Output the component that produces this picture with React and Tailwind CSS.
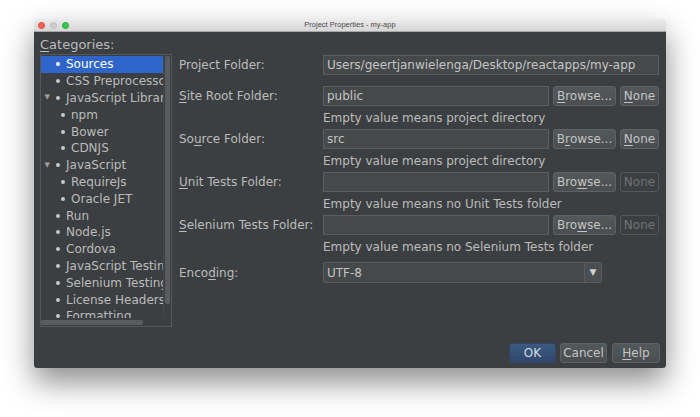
import React from "react";

const F = { fontFamily: '"DejaVu Sans", "Liberation Sans", sans-serif' };

function U({ children }) {
  return <span className="underline underline-offset-2">{children}</span>;
}

const tree = [
  { t: "Sources", lvl: 0, sel: true },
  { t: "CSS Preprocessors", lvl: 0 },
  { t: "JavaScript Libraries", lvl: 0, exp: true },
  { t: "npm", lvl: 1 },
  { t: "Bower", lvl: 1 },
  { t: "CDNJS", lvl: 1 },
  { t: "JavaScript", lvl: 0, exp: true },
  { t: "RequireJs", lvl: 1 },
  { t: "Oracle JET", lvl: 1 },
  { t: "Run", lvl: 0 },
  { t: "Node.js", lvl: 0 },
  { t: "Cordova", lvl: 0 },
  { t: "JavaScript Testing", lvl: 0 },
  { t: "Selenium Testing", lvl: 0 },
  { t: "License Headers", lvl: 0 },
  { t: "Formatting", lvl: 0 },
];

function Btn({ children, w, disabled }) {
  return (
    <div
      className={`h-[20px] flex items-center justify-center rounded-[3px] border ${disabled ? "text-[#6f7274] bg-[#3c3f41] border-[#55585a]" : "text-[#c4c4c4] border-[#5e6264] bg-gradient-to-b from-[#53585a] to-[#4a4e50]"}`}
      style={{ width: w }}
    >
      {children}
    </div>
  );
}

function Field({ value, w = 226 }) {
  return (
    <div
      className="h-[20px] border border-[#5a5d5f] bg-[#45494a] text-[#c4c4c4] flex items-center pl-[3px] whitespace-nowrap overflow-hidden"
      style={{ width: w }}
    >
      {value}
    </div>
  );
}

function Row({ label, value, disabledNone, browse }) {
  return (
    <div className="flex items-center h-[20px]">
      <div className="w-[144px] text-[#bbbbbb] whitespace-nowrap">{label}</div>
      <Field value={value} />
      <div className="ml-[4px]"><Btn w={63}>{browse}</Btn></div>
      <div className="ml-[4px]"><Btn w={39} disabled={disabledNone}>{disabledNone ? "None" : <><U>N</U>one</>}</Btn></div>
    </div>
  );
}

function Helper({ children, h = 23 }) {
  return (
    <div className="flex items-center pl-[144px] text-[#bbbbbb] whitespace-nowrap" style={{ height: h }}>
      {children}
    </div>
  );
}

export default function App() {
  return (
    <div className="w-[700px] h-[417px] bg-white overflow-hidden text-[12px] leading-none" style={F}>
      <div className="ml-[34px] mt-[19px] w-[632px] h-[349px] flex flex-col shadow-[0_14px_30px_rgba(0,0,0,0.45)] rounded-[3px] overflow-hidden">
        {/* title bar */}
        <div className="h-[13px] relative flex items-center bg-gradient-to-b from-[#ececec] to-[#d6d6d6] border-b border-[#a9a9a9]">
          <div className="flex gap-[5px] pl-[4px]">
            <div className="w-[7px] h-[7px] rounded-full bg-[#fc5f57] border border-[#e0443e]" />
            <div className="w-[7px] h-[7px] rounded-full bg-[#cfcfcf] border border-[#bcbcbc]" />
            <div className="w-[7px] h-[7px] rounded-full bg-[#35c84a] border border-[#26a93a]" />
          </div>
          <div className="absolute inset-0 flex items-center justify-center text-[7.5px] text-[#4a4a4a]" style={{ fontFamily: '"Liberation Sans", sans-serif' }}>
            Project Properties - my-app
          </div>
        </div>
        {/* body */}
        <div className="flex-1 bg-[#3c3f41] flex flex-col px-[6px] pb-[5px]">
          <div className="flex">
            {/* left */}
            <div className="w-[132px] flex flex-col shrink-0">
              <div className="h-[22px] pt-[6px] text-[13px] text-[#bbbbbb]"><U>C</U>ategories:</div>
              <div className="h-[273px] border border-[#555759] flex flex-col overflow-hidden">
                <div className="flex flex-1 min-h-0 overflow-hidden">
                  <div className="flex-1 min-w-0 pt-[1px] overflow-hidden">
                    {tree.map((r) => (
                      <div
                        key={r.t}
                        className={`h-[16.8px] flex items-center whitespace-nowrap ${r.sel ? "bg-[#2f65ca] text-white" : "text-[#bbbbbb]"}`}
                      >
                        <div className="w-[10px] shrink-0 flex justify-end pr-[1px] text-[7px] text-[#a0a0a0]">{r.exp ? "▼" : ""}</div>
                        <div style={{ width: r.lvl ? 17 : 12 }} className="shrink-0 flex justify-end">
                          <div className={`w-[4px] h-[4px] rounded-full mr-[3px] ${r.sel ? "bg-white" : "bg-[#c8c8c8]"}`} />
                        </div>
                        <div className="pl-[3px] shrink-0">{r.t}</div>
                      </div>
                    ))}
                  </div>
                  <div className="w-[8px] shrink-0 flex justify-center pt-[1px] pb-[14px] border-l border-[#45484a]">
                    <div className="w-[5px] h-full rounded-[2px] bg-[#595c5e]" />
                  </div>
                </div>
                <div className="h-[8px] shrink-0 flex items-center">
                  <div className="w-[102px] h-[5px] rounded-[2px] bg-[#595c5e]" />
                </div>
              </div>
            </div>
            {/* right */}
            <div className="ml-[7px] pt-[23px] flex flex-col">
              <div className="flex items-center h-[20px]">
                <div className="w-[144px] text-[#bbbbbb]">Project Folder:</div>
                <Field value="Users/geertjanwielenga/Desktop/reactapps/my-app" w={336} />
              </div>
              <div className="h-[11px]" />
              <Row label={<><U>S</U>ite Root Folder:</>} value="public" browse={<><U>B</U>rowse...</>} />
              <Helper>Empty value means project directory</Helper>
              <Row label={<>So<U>u</U>rce Folder:</>} value="src" browse={<>B<U>r</U>owse...</>} />
              <Helper>Empty value means project directory</Helper>
              <Row label={<><U>U</U>nit Tests Folder:</>} value="" browse={<>Bro<U>w</U>se...</>} disabledNone />
              <Helper>Empty value means no Unit Tests folder</Helper>
              <Row label={<><U>S</U>elenium Tests Folder:</>} value="" browse={<>Bro<U>w</U>se...</>} disabledNone />
              <Helper h={24}>Empty value means no Selenium Tests folder</Helper>
              <div className="h-[3px]" />
              <div className="flex items-center h-[21px]">
                <div className="w-[144px] text-[#bbbbbb]">Enco<U>d</U>ing:</div>
                <div className="w-[279px] h-[21px] flex border border-[#5a5d5f] rounded-[2px] bg-[#45494a] text-[#c4c4c4]">
                  <div className="flex-1 flex items-center pl-[3px]">UTF-8</div>
                  <div className="w-[17px] border-l border-[#5a5d5f] flex items-center justify-center text-[9px] text-[#d0d0d0] bg-[#4a4e50]">▼</div>
                </div>
              </div>
            </div>
          </div>
          <div className="mt-auto flex justify-end gap-[4px]">
            <div className="w-[47px] h-[20px] flex items-center justify-center rounded-[3px] border border-[#2f4664] bg-gradient-to-b from-[#3b5a82] to-[#30486a] text-[#d4dbe5]">OK</div>
            <Btn w={47}>Cancel</Btn>
            <div className="ml-[1px]"><Btn w={48}><U>H</U>elp</Btn></div>
          </div>
        </div>
      </div>
    </div>
  );
}
